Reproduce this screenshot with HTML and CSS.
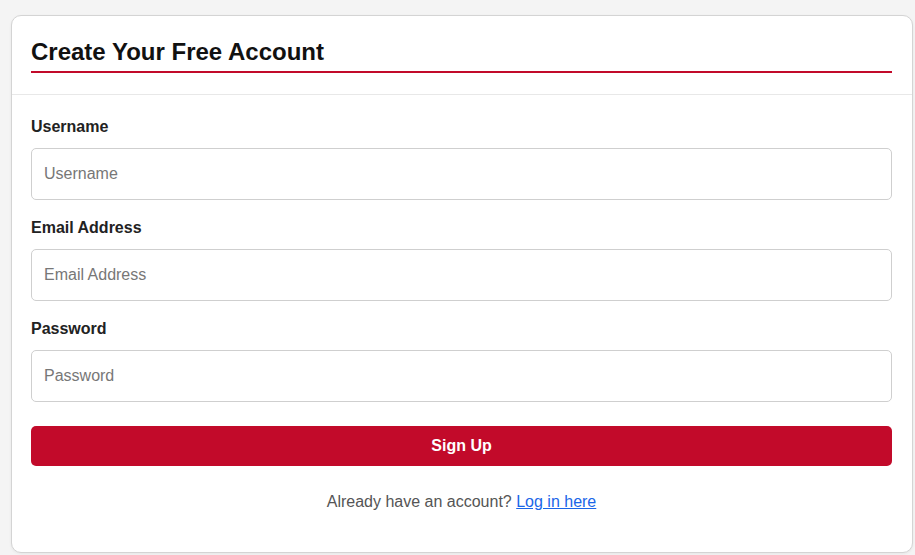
FILE: index.html
```html
<!DOCTYPE html>
<html lang="en">
<head>
<meta charset="utf-8">
<title>Create Your Free Account</title>
<link rel="stylesheet" href="styles.css">
</head>
<body>
<div class="card">
  <div class="card-header">
    <h2 class="title">Create Your Free Account</h2>
  </div>
  <form class="card-body">
    <div class="group">
      <label class="label" for="username">Username</label>
      <input class="input" id="username" type="text" placeholder="Username">
    </div>
    <div class="group">
      <label class="label" for="email">Email Address</label>
      <input class="input" id="email" type="email" placeholder="Email Address">
    </div>
    <div class="group">
      <label class="label" for="password">Password</label>
      <input class="input" id="password" type="password" placeholder="Password">
    </div>
    <button class="btn" type="button">Sign Up</button>
    <p class="footer">Already have an account? <a class="link" href="#">Log in here</a></p>
  </form>
</div>
</body>
</html>
```
FILE: styles.css
```css
* { box-sizing: border-box; }
html, body { margin: 0; }
body {
  background: #f4f4f4;
  font-family: "Liberation Sans", Arial, sans-serif;
  padding: 15px 2px 0 11px;
  height: 555px;
  overflow: hidden;
}
.card {
  background: #fff;
  border: 1px solid #d4d4d4;
  border-radius: 10px;
  height: 538px;
  box-shadow: 0 1px 3px rgba(0,0,0,0.06);
}
.card-header {
  padding: 22px 20px 21px 19px;
  border-bottom: 1px solid #e8e8e8;
}
.title {
  margin: 0;
  font-size: 24px;
  font-weight: 700;
  color: #111;
  line-height: 28px;
  padding-bottom: 5px;
  border-bottom: 2px solid #c20a2a;
}
.card-body {
  padding: 22px 20px 20px 19px;
  display: flex;
  flex-direction: column;
}
.group {
  display: flex;
  flex-direction: column;
  margin-bottom: 18px;
}
.label {
  font-size: 16px;
  font-weight: 700;
  color: #222;
  line-height: 20px;
  margin-bottom: 11px;
}
.input {
  height: 52px;
  border: 1px solid #cfcfcf;
  border-radius: 5px;
  padding: 0 12px;
  font-family: "Liberation Sans", Arial, sans-serif;
  font-size: 16px;
  color: #222;
  background: #fff;
  outline: none;
}
.input::placeholder { color: #777; }
.btn {
  margin-top: 6px;
  height: 40px;
  border: 0;
  border-radius: 5px;
  background: #c20a2a;
  color: #fff;
  font-family: "Liberation Sans", Arial, sans-serif;
  font-size: 16px;
  font-weight: 700;
}
.footer {
  margin: 27px 0 0;
  text-align: center;
  font-size: 16px;
  line-height: 18px;
  color: #555;
}
.link { color: #1a66e8; text-decoration: underline; }
```
